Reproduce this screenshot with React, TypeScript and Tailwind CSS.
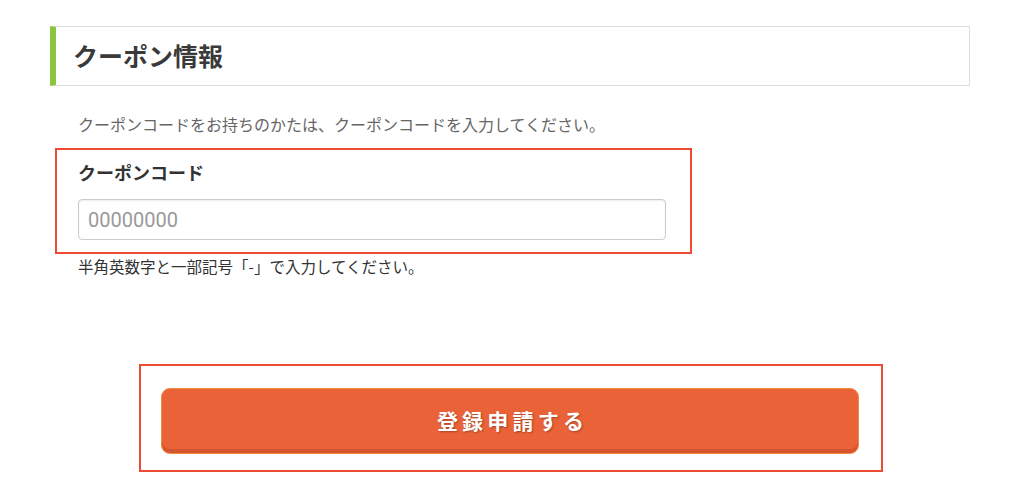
import React from "react";

const App = () => {
  return (
    <div className="w-full h-[498px] bg-white font-['Noto_Sans_CJK_JP','Noto_Sans',sans-serif] text-[#333]">
      <div className="pt-[26px] pl-[50px]">
        <h2 className="w-[920px] h-[60px] flex items-center border border-[#dcdcdc] border-l-[6px] border-l-[#8cc63e] pl-[17px] text-[25px] font-bold text-[#3a3a3a]">
          クーポン情報
        </h2>
      </div>

      <p className="mt-[26px] pl-[78px] text-[16px] leading-[24px] text-[#666]">
        クーポンコードをお持ちのかたは、クーポンコードを入力してください。
      </p>

      <div className="ml-[55px] mt-[12px] w-[637px] h-[106px] border-2 border-[#ee4b35] pl-[21px] pt-[10px]">
        <label className="block text-[18px] font-bold leading-[24px] text-[#333]">
          クーポンコード
        </label>
        <input
          type="text"
          placeholder="00000000"
          className="mt-[15px] w-[588px] h-[41px] border border-[#ccc] rounded-[4px] px-[9px] text-[20px] font-['Roboto',sans-serif] text-[#333] placeholder:text-[#999] shadow-[inset_0_1px_2px_rgba(0,0,0,0.08)] outline-none"
        />
      </div>

      <p className="mt-[1px] pl-[78px] text-[15.5px] leading-[22px] text-[#333]">
        半角英数字と一部記号「-」で入力してください。
      </p>

      <div className="ml-[139px] mt-[87px] w-[744px] h-[108px] border-2 border-[#ee4b35] pl-[20px] pt-[22px]">
        <button className="w-[698px] h-[66px] rounded-[9px] bg-[#ea6237] border border-[#ef8a3f] shadow-[inset_0_-4px_0_#d4552f] text-white text-[21px] font-bold tracking-[0.2em] pl-[5px] [text-shadow:1px_1px_2px_rgba(0,0,0,0.3)]">
          登録申請する
        </button>
      </div>
    </div>
  );
};

export default App;
